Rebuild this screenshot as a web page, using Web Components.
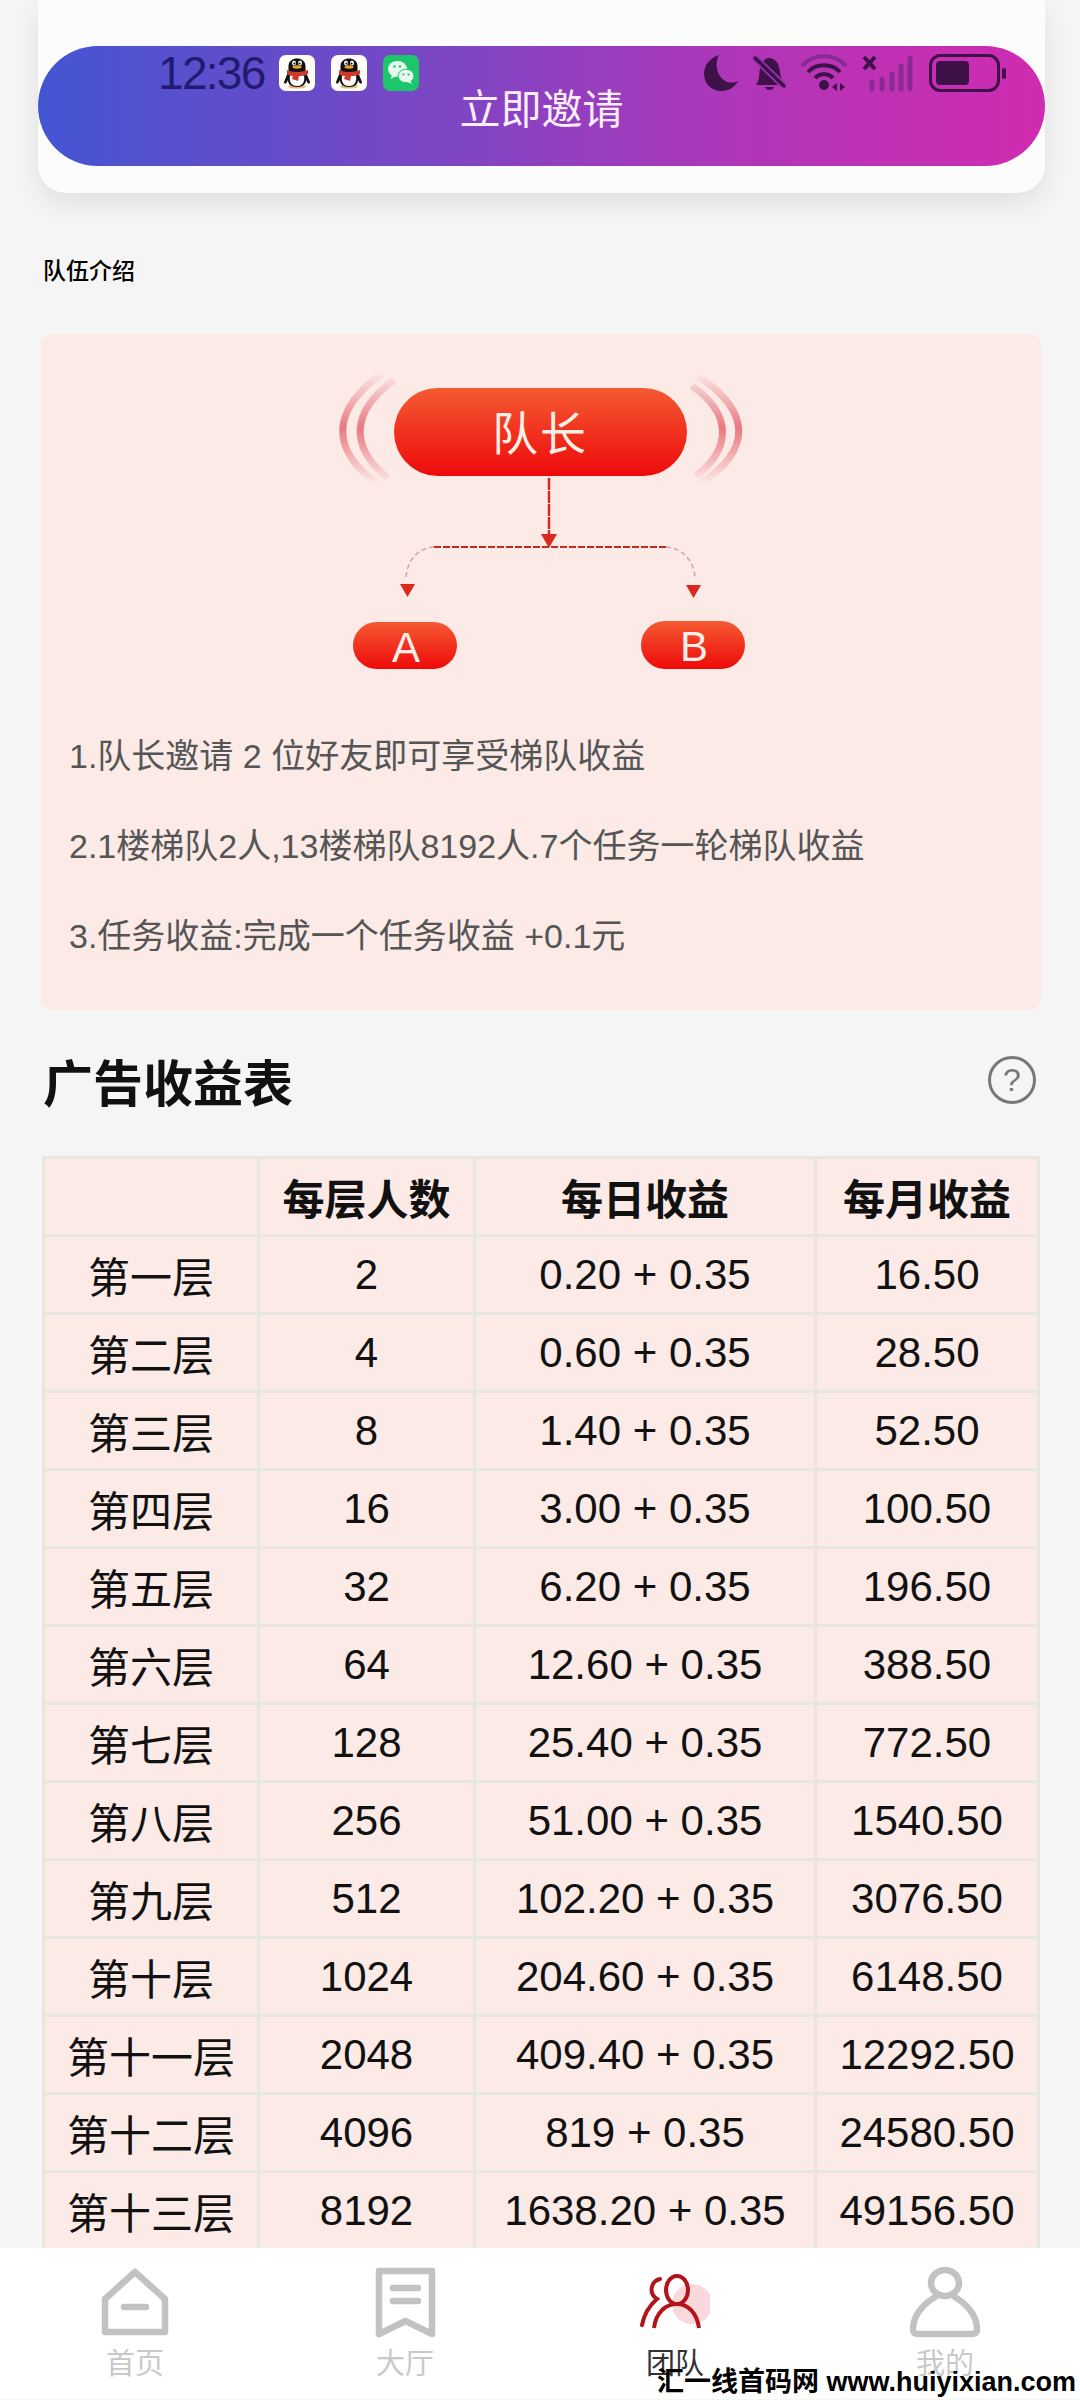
<!DOCTYPE html>
<html lang="zh">
<head>
<meta charset="utf-8">
<title>队伍介绍</title>
<style>
    html, body {
        margin: 0;
        padding: 0;
    }

    body {
        position: relative;
        width: 1080px;
        height: 2400px;
        overflow: hidden;
        background: #f5f5f5;
        color: #111;
        font-family: "Liberation Sans", "Noto Sans CJK SC", sans-serif;
    }
</style>
</head>
<body>
<status-overlay></status-overlay>
<invite-card>立即邀请</invite-card>
<small-title>队伍介绍</small-title>
<intro-panel>
    <team-diagram></team-diagram>
    <p>1.队长邀请 2 位好友即可享受梯队收益</p>
    <p>2.1楼梯队2人,13楼梯队8192人.7个任务一轮梯队收益</p>
    <p>3.任务收益:完成一个任务收益 +0.1元</p>
</intro-panel>
<section-heading>广告收益表</section-heading>
<earnings-table></earnings-table>
<bottom-nav>
    <nav-item icon="home">首页</nav-item>
    <nav-item icon="hall">大厅</nav-item>
    <nav-item icon="team" active>团队</nav-item>
    <nav-item icon="me">我的</nav-item>
</bottom-nav>
<water-mark>汇一线首码网 www.huiyixian.com</water-mark>

<script>
// penguin tile, used twice in the status bar
const penguin = `
    <svg width="36" height="36" viewBox="0 0 36 36">
        <rect width="36" height="36" rx="7" fill="#fffdf8"/>
        <ellipse cx="18" cy="31.5" rx="9" ry="2" fill="#e3b77c"/>
        <path d="M9.5 11C9.5 1 26.5 1 26.5 11V16L31 27C31 29 29 29 28 27L27 25C27 29 24 32 18 32C12 32 9 29 9 25L8 27C7 29 5 29 5 27L9.5 16Z" fill="#111"/>
        <path d="M11 21C11 17 25 17 25 21C26 26 24 31 18 31C12 31 10 26 11 21Z" fill="#fff"/>
        <ellipse cx="15" cy="8" rx="2" ry="2.6" fill="#fff"/>
        <ellipse cx="21" cy="8" rx="2" ry="2.6" fill="#fff"/>
        <circle cx="15.4" cy="8.4" r="1" fill="#111"/>
        <circle cx="20.6" cy="8.4" r="1" fill="#111"/>
        <ellipse cx="18" cy="12" rx="4.5" ry="1.7" fill="#eda231"/>
        <path d="M8 15C13 17.5 23 17.5 29 15L29 19C26 21 22 21 20 21L19 26L13 24L14 21C11 21 9 20 8 19Z" fill="#cf3a2c"/>
    </svg>`;

const wechat = `
    <svg width="36" height="36" viewBox="0 0 36 36">
        <rect width="36" height="36" rx="7" fill="#1bc76a"/>
        <ellipse cx="14.5" cy="14" rx="9.5" ry="8" fill="#e8f8ef"/>
        <path d="M9 19L8 24L13 21Z" fill="#e8f8ef"/>
        <ellipse cx="23" cy="21" rx="8" ry="6.8" fill="#e8f8ef" stroke="#1bc76a" stroke-width="1"/>
        <path d="M27 25L29 29L24 27Z" fill="#e8f8ef"/>
        <circle cx="11.5" cy="11.5" r="1.2" fill="#1bc76a"/>
        <circle cx="17" cy="11.5" r="1.2" fill="#1bc76a"/>
        <circle cx="20.5" cy="19.5" r="1.1" fill="#1bc76a"/>
        <circle cx="25.5" cy="19.5" r="1.1" fill="#1bc76a"/>
    </svg>`;

class StatusOverlay extends HTMLElement {
    constructor() {
        super();
        this.attachShadow({ mode: 'open' });
    }

    connectedCallback() {
        const dark = '#3f1149';
        const dim = '#8a2a94';
        this.shadowRoot.innerHTML = `
            <style>
            :host {
                position: absolute;
                top: 54px;
                left: 0;
                width: 1080px;
                height: 38px;
                box-sizing: border-box;
                padding: 0 74px 0 158px;
                display: flex;
                align-items: center;
                justify-content: space-between;
                z-index: 2;
            }
            .side {
                display: flex;
                align-items: center;
            }
            .time {
                width: 121px;
                font-size: 46px;
                line-height: 38px;
                letter-spacing: -1.7px;
                color: #1e1b70;
            }
            .tiles {
                display: flex;
                gap: 16px;
            }
            .tiles svg, .right svg {
                display: block;
            }
            .right {
                gap: 15px;
            }
            </style>
            <div class="side">
                <span class="time">12:36</span>
                <div class="tiles">${penguin}${penguin}${wechat}</div>
            </div>
            <div class="side right">
                <svg width="34" height="36" viewBox="0 0 34 36">
                    <path d="M15 0C6 3 0 10 0 19C0 29 8 36 17 36C25 36 31 32 34 26C30 28 25 28 21 26C13 21 10 9 15 0Z" fill="${dark}"/>
                </svg>
                <svg width="33" height="36" viewBox="0 0 33 36">
                    <path d="M4 28C7 24 6 18 7 13C8 7 12 3 16 3C21 3 25 7 26 12L28 22C29 25 30 27 32 29V30H3Z" fill="${dark}"/>
                    <path d="M12 32H21C20 36 13 36 12 32Z" fill="${dark}"/>
                    <path d="M2 3L31 31" stroke="#9a35ae" stroke-width="7"/>
                    <path d="M2 3L31 31" stroke="${dark}" stroke-width="3.5" stroke-linecap="round"/>
                </svg>
                <svg width="46" height="38" viewBox="0 0 46 38" fill="none">
                    <path d="M1 12C12 -1 34 -1 45 12" stroke="${dim}" stroke-width="4"/>
                    <path d="M7 18C15 9 31 9 39 18" stroke="${dark}" stroke-width="4"/>
                    <path d="M14 24C19 19 27 19 32 24" stroke="${dark}" stroke-width="4"/>
                    <circle cx="23" cy="31" r="5" fill="${dark}"/>
                    <path d="M36 29L31 33L36 37ZM39 29L44 33L39 37Z" fill="${dark}"/>
                </svg>
                <svg width="52" height="37" viewBox="0 0 52 37">
                    <path d="M2 2L13 14M13 2L2 14" stroke="${dark}" stroke-width="4"/>
                    <g stroke="${dim}" stroke-width="5" stroke-linecap="round">
                        <path d="M10 27V34M20 24V34M30 19V34M39 11V34M48 3V34"/>
                    </g>
                </svg>
                <svg width="77" height="38" viewBox="0 0 77 38">
                    <rect x="1.5" y="1.5" width="68" height="35" rx="10" fill="none" stroke="${dark}" stroke-width="3"/>
                    <rect x="7" y="7" width="33" height="24" rx="4" fill="${dark}"/>
                    <rect x="73" y="14" width="4" height="11" rx="2" fill="${dark}"/>
                </svg>
            </div>`;
    }
}

class InviteCard extends HTMLElement {
    constructor() {
        super();
        this.attachShadow({ mode: 'open' });
        this.shadowRoot.innerHTML = `
            <style>
            :host {
                display: block;
                box-sizing: border-box;
                width: 1007px;
                height: 193px;
                margin-left: 38px;
                padding-top: 46px;
                background: #fcfcfd;
                border-radius: 0 0 28px 28px;
                box-shadow: 0 10px 26px rgba(0, 0, 0, 0.09);
            }
            .button {
                height: 120px;
                border-radius: 60px;
                display: flex;
                align-items: center;
                justify-content: center;
                background: linear-gradient(90deg, #4455d2, #7c46c4 40%, #b136b8 70%, #d02bb0);
                color: #fdeefb;
                font-size: 41px;
                padding-top: 0;
            }
            </style>
            <div class="button"><slot></slot></div>`;
    }
}

class SmallTitle extends HTMLElement {
    constructor() {
        super();
        this.attachShadow({ mode: 'open' });
        this.shadowRoot.innerHTML = `
            <style>
            :host {
                display: block;
                margin: 62px 0 47px 43px;
                font-size: 23px;
                line-height: 32px;
                font-weight: 500;
                color: #000;
            }
            </style>
            <slot></slot>`;
    }
}

class IntroPanel extends HTMLElement {
    constructor() {
        super();
        this.attachShadow({ mode: 'open' });
        this.shadowRoot.innerHTML = `
            <style>
            :host {
                display: block;
                box-sizing: border-box;
                width: 1000px;
                height: 676px;
                margin-left: 41px;
                padding-bottom: 30px;
                background: #fbeae6;
                border-radius: 12px;
                color: #555;
                font-size: 34px;
                line-height: 90px;
            }
            ::slotted(p) {
                margin: 0;
                padding-left: 28px;
            }
            </style>
            <slot></slot>`;
    }
}

class TeamDiagram extends HTMLElement {
    constructor() {
        super();
        this.attachShadow({ mode: 'open' });
        // viewBox uses page coordinates so the numbers read off the screenshot directly
        this.shadowRoot.innerHTML = `
            <style>
            :host {
                display: block;
                height: 377px;
            }
            svg {
                display: block;
            }
            text {
                font-family: "Liberation Sans", "Noto Sans CJK SC", sans-serif;
                text-anchor: middle;
                fill: #fdeee8;
            }
            </style>
            <svg width="1000" height="377" viewBox="41 334 1000 377" fill="none">
                <defs>
                    <linearGradient id="pill" x1="0" y1="0" x2="0" y2="1">
                        <stop offset="0" stop-color="#f45a32"/>
                        <stop offset="1" stop-color="#ee0a0a"/>
                    </linearGradient>
                    <linearGradient id="wave" x1="0" y1="372" x2="0" y2="484" gradientUnits="userSpaceOnUse">
                        <stop offset="0" stop-color="#e8737c" stop-opacity="0"/>
                        <stop offset="0.5" stop-color="#e8737c" stop-opacity="0.95"/>
                        <stop offset="1" stop-color="#e8737c" stop-opacity="0"/>
                    </linearGradient>
                </defs>
                <g stroke="url(#wave)" stroke-width="7">
                    <path d="M384 372C330 410 330 450 378 484"/>
                    <path d="M394 380C350 412 350 448 388 478"/>
                    <path d="M698 376C752 412 752 450 700 484"/>
                    <path d="M692 386C732 414 732 448 696 476"/>
                </g>
                <rect x="394" y="388" width="293" height="88" rx="44" fill="url(#pill)"/>
                <text x="540" y="450" font-size="46" letter-spacing="2">队长</text>
                <path d="M549 478V536" stroke="#d9281f" stroke-width="2.5" stroke-dasharray="12 1"/>
                <path d="M541 534H557L549 548Z" fill="#d9281f"/>
                <path d="M434 547H666" stroke="#c92a25" stroke-width="2" stroke-dasharray="7 2"/>
                <path d="M434 547C418 548 407 560 406 578M666 547C682 548 694 560 695 578" stroke="#c9a8a8" stroke-width="1.5" stroke-dasharray="5 3"/>
                <path d="M400 584H415L407.5 597Z" fill="#d9281f"/>
                <path d="M686 585H701L693.5 598Z" fill="#d9281f"/>
                <rect x="353" y="622" width="104" height="47" rx="23.5" fill="url(#pill)"/>
                <text x="406" y="662" font-size="42">A</text>
                <rect x="641" y="621" width="104" height="48" rx="24" fill="url(#pill)"/>
                <text x="694" y="661" font-size="42">B</text>
            </svg>`;
    }
}

class SectionHeading extends HTMLElement {
    constructor() {
        super();
        this.attachShadow({ mode: 'open' });
        this.shadowRoot.innerHTML = `
            <style>
            :host {
                display: flex;
                align-items: center;
                justify-content: space-between;
                height: 60px;
                margin: 40px 44px 46px 43px;
                font-size: 50px;
                font-weight: 700;
                color: #111;
            }
            .help {
                box-sizing: border-box;
                width: 48px;
                height: 48px;
                border: 3px solid #777;
                border-radius: 50%;
                display: flex;
                align-items: center;
                justify-content: center;
                font-size: 32px;
                font-weight: 400;
                color: #777;
            }
            </style>
            <slot></slot>
            <span class="help">?</span>`;
    }
}

class EarningsTable extends HTMLElement {
    constructor() {
        super();
        this.attachShadow({ mode: 'open' });
        this._head = ['', '每层人数', '每日收益', '每月收益'];
        this._rows = [
            ['第一层', '2', '0.20 + 0.35', '16.50'],
            ['第二层', '4', '0.60 + 0.35', '28.50'],
            ['第三层', '8', '1.40 + 0.35', '52.50'],
            ['第四层', '16', '3.00 + 0.35', '100.50'],
            ['第五层', '32', '6.20 + 0.35', '196.50'],
            ['第六层', '64', '12.60 + 0.35', '388.50'],
            ['第七层', '128', '25.40 + 0.35', '772.50'],
            ['第八层', '256', '51.00 + 0.35', '1540.50'],
            ['第九层', '512', '102.20 + 0.35', '3076.50'],
            ['第十层', '1024', '204.60 + 0.35', '6148.50'],
            ['第十一层', '2048', '409.40 + 0.35', '12292.50'],
            ['第十二层', '4096', '819 + 0.35', '24580.50'],
            ['第十三层', '8192', '1638.20 + 0.35', '49156.50']
        ];
    }

    connectedCallback() {
        const head = this._head.map(val => `<div class="cell head">${val}</div>`).join('');
        const rows = this._rows.map(row => row.map(val => `<div class="cell">${val}</div>`).join('')).join('');
        this.shadowRoot.innerHTML = `
            <style>
            :host {
                display: block;
                width: 998px;
                margin-left: 42px;
            }
            .grid {
                display: grid;
                grid-template-columns: 212px 213px 338px 220px;
                grid-auto-rows: 75px;
                gap: 3px;
                padding: 3px 3px 0;
                background: #e7e6e1;
            }
            .cell {
                display: flex;
                align-items: center;
                justify-content: center;
                background: #fbeae6;
                font-size: 42px;
                color: #111;
            }
            .head {
                font-weight: 700;
            }
            </style>
            <div class="grid">${head}${rows}</div>`;
    }
}

class BottomNav extends HTMLElement {
    constructor() {
        super();
        this.attachShadow({ mode: 'open' });
        this.shadowRoot.innerHTML = `
            <style>
            :host {
                display: grid;
                grid-template-columns: repeat(4, 1fr);
                height: 151px;
                background: #fff;
            }
            </style>
            <slot></slot>`;
    }
}

class NavItem extends HTMLElement {
    constructor() {
        super();
        this.attachShadow({ mode: 'open' });
    }

    connectedCallback() {
        const gray = '#c2c2c2';
        const red = '#b5131c';
        const icons = {
            home: `<path d="M35 5L65 32V65H5V32Z" stroke="${gray}" stroke-width="6.5" stroke-linejoin="round"/>
                   <path d="M24 40H46" stroke="${gray}" stroke-width="6.5" stroke-linecap="round"/>`,
            hall: `<path d="M9 4H62V67L35.5 54L9 67Z" stroke="${gray}" stroke-width="6.5" stroke-linejoin="round"/>
                   <path d="M23 21H48M23 34H48" stroke="${gray}" stroke-width="6.5" stroke-linecap="round"/>`,
            team: `<circle cx="52" cy="37" r="20" fill="#f9d9dc"/>
                   <ellipse cx="37" cy="23" rx="11" ry="14" stroke="${red}" stroke-width="4"/>
                   <path d="M14 61C16 45 26 37 37 37C48 37 57 46 59 61" stroke="${red}" stroke-width="4"/>
                   <path d="M20 12C11 14 8 26 17 32C10 38 4 48 2 58" stroke="${red}" stroke-width="4" stroke-linecap="round"/>`,
            me: `<ellipse cx="35" cy="16" rx="14" ry="13" stroke="${gray}" stroke-width="6.5"/>
                 <path d="M27 29C14 36 3 48 3 62C3 66 5 67 8 67H62C65 67 67 66 67 62C67 48 56 36 43 29" stroke="${gray}" stroke-width="6.5" stroke-linejoin="round"/>`
        };
        const active = this.hasAttribute('active');
        this.shadowRoot.innerHTML = `
            <style>
            :host {
                display: flex;
                flex-direction: column;
                align-items: center;
                padding-top: 19px;
                font-size: 29px;
                line-height: 40px;
                color: ${active ? '#333' : '#c9c9c9'};
            }
            svg {
                display: block;
                margin-bottom: 5px;
            }
            </style>
            <svg width="70" height="72" viewBox="0 0 70 72" fill="none">${icons[this.getAttribute('icon')]}</svg>
            <slot></slot>`;
    }
}

// site stamp on top of the tab bar
class WaterMark extends HTMLElement {
    constructor() {
        super();
        this.attachShadow({ mode: 'open' });
        this.shadowRoot.innerHTML = `
            <style>
            :host {
                position: absolute;
                right: 4px;
                top: 2366px;
                font-size: 27px;
                line-height: 32px;
                font-weight: 700;
                color: #000;
                white-space: nowrap;
                z-index: 3;
            }
            </style>
            <slot></slot>`;
    }
}

customElements.define('status-overlay', StatusOverlay);
customElements.define('invite-card', InviteCard);
customElements.define('small-title', SmallTitle);
customElements.define('intro-panel', IntroPanel);
customElements.define('team-diagram', TeamDiagram);
customElements.define('section-heading', SectionHeading);
customElements.define('earnings-table', EarningsTable);
customElements.define('bottom-nav', BottomNav);
customElements.define('nav-item', NavItem);
customElements.define('water-mark', WaterMark);
</script>
</body>
</html>
